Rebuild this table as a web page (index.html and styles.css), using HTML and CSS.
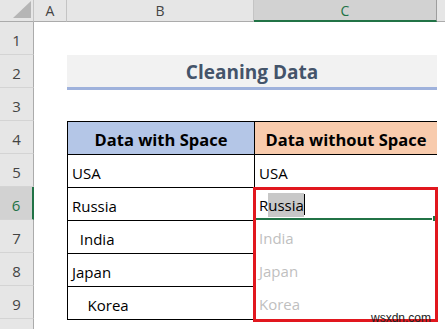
FILE: index.html
```html
<!DOCTYPE html>
<html lang="en">
<head>
    <meta charset="UTF-8">
    <meta name="viewport" content="width=device-width, initial-scale=1.0">
    <title>Cleaning Data</title>

    <link rel="stylesheet" href="styles.css">
</head>
<body>
    <div class="sheet">
        <!-- column headers -->
        <div class="col-head corner">
            <svg width="18" height="17" viewBox="0 0 18 17"><polygon points="18,0 18,17 0,17" fill="#b5b5b5"/></svg>
        </div>
        <div class="col-head">A</div>
        <div class="col-head">B</div>
        <div class="col-head active">C</div>
        <div class="col-head rest"></div>

        <!-- row 1 -->
        <div class="row-head">1</div>
        <div class="cell"></div><div class="cell"></div><div class="cell"></div><div class="cell"></div>

        <!-- row 2: title -->
        <div class="row-head">2</div>
        <div class="cell"></div>
        <div class="title">Cleaning Data</div>
        <div class="cell"></div>

        <!-- row 3 -->
        <div class="row-head">3</div>
        <div class="cell"></div><div class="cell"></div><div class="cell"></div><div class="cell"></div>

        <!-- row 4: table header -->
        <div class="row-head">4</div>
        <div class="cell"></div>
        <div class="cell td th with-space">Data with Space</div>
        <div class="cell td th no-space">Data without Space</div>
        <div class="cell"></div>

        <!-- row 5 -->
        <div class="row-head">5</div>
        <div class="cell"></div>
        <div class="cell td">USA</div>
        <div class="cell td">USA</div>
        <div class="cell"></div>

        <!-- row 6 -->
        <div class="row-head active">6</div>
        <div class="cell"></div>
        <div class="cell td">Russia</div>
        <div class="cell td editing">R<span class="sel">ussia</span><span class="caret"></span><span class="handle"></span></div>
        <div class="cell"></div>

        <!-- row 7 -->
        <div class="row-head">7</div>
        <div class="cell"></div>
        <div class="cell td">  India</div>
        <div class="cell td ghost">India</div>
        <div class="cell"></div>

        <!-- row 8 -->
        <div class="row-head">8</div>
        <div class="cell"></div>
        <div class="cell td">Japan</div>
        <div class="cell td ghost">Japan</div>
        <div class="cell"></div>

        <!-- row 9 -->
        <div class="row-head">9</div>
        <div class="cell"></div>
        <div class="cell td">    Korea</div>
        <div class="cell td ghost">Korea</div>
        <div class="cell"></div>

        <!-- row 10 (only its top edge is on screen) -->
        <div class="row-head"></div>
        <div class="cell"></div>
        <div class="cell td-end"></div>
        <div class="cell td-end"></div>
        <div class="cell"></div>

        <div class="callout"></div>
        <div class="mark">wsxdn.com</div>
    </div>
</body>
</html>
```

FILE: styles.css
```css
body {
    margin: 0;
    background-color: #fff;
    font-family: 'Open Sans', 'Noto Sans', sans-serif;
    color: #000;
}

.sheet {
    position: relative;
    display: grid;
    grid-template-columns: 34px 33px 187px 183px 1fr;
    grid-template-rows: 22px repeat(10, 33px);
    width: 445px;
    height: 329px;
    overflow: hidden;
}

.col-head {
    display: flex;
    align-items: center;
    justify-content: center;
    box-sizing: border-box;
    background-color: #e6e6e6;
    border-right: 1px solid #c4c4c4;
    border-bottom: 1px solid #ababab;
    font-size: 14px;
    color: #444;
}

.col-head.corner {
    align-items: flex-end;
    justify-content: flex-end;
    padding: 0 2px 3px 0;
}

.col-head.corner svg {
    display: block;
}

.col-head.active {
    background-color: #d2d2d2;
    color: #217346;
    border-right-color: #9e9e9e;
    border-bottom: 2px solid #217346;
}

.col-head.rest {
    border-right: none;
}

.row-head {
    display: flex;
    align-items: center;
    justify-content: center;
    box-sizing: border-box;
    padding-top: 3px;
    background-color: #e6e6e6;
    border-right: 1px solid #ababab;
    border-bottom: 1px solid #d4d4d4;
    font-size: 15px;
    color: #444;
}

.row-head.active {
    background-color: #d2d2d2;
    color: #217346;
    border-right: 2px solid #217346;
}

.cell {
    box-sizing: border-box;
}

.title {
    grid-column: 3 / span 2;
    align-self: start;
    height: 35px;
    box-sizing: border-box;
    display: flex;
    align-items: center;
    justify-content: center;
    padding-top: 2px;
    background-color: #f2f2f2;
    border-bottom: 3px solid #9fb2dc;
    font-size: 19px;
    font-weight: bold;
    color: #44546a;
    position: relative;
    z-index: 1;
}

.td {
    display: flex;
    align-items: center;
    padding: 3px 4px 0;
    border-left: 1px solid #000;
    border-top: 1px solid #000;
    font-size: 15px;
    white-space: pre;
    position: relative;
}

.td:nth-child(5n+4) {
    border-right: 1px solid #000;
}

.td-end {
    border-top: 1px solid #000;
}

.th {
    justify-content: center;
    font-size: 16.5px;
    font-weight: bold;
}

.with-space {
    background-color: #b4c6e7;
}

.no-space {
    background-color: #f8cbad;
}

.editing {
    border-bottom: 2px solid #217346;
}

.editing + .cell,
.ghost + .cell {
    border: none;
}

.ghost {
    border-top: none;
    color: #bfbfbf;
}

.sel {
    background-color: #c8c8c8;
    padding: 2px 0;
}

.caret {
    display: inline-block;
    width: 1px;
    height: 21px;
    background-color: #000;
}

.handle {
    position: absolute;
    right: -2px;
    bottom: -4px;
    width: 5px;
    height: 5px;
    background-color: #217346;
    border: 1px solid #fff;
}

.callout {
    position: absolute;
    left: 253px;
    top: 187px;
    width: 185px;
    height: 135px;
    box-sizing: border-box;
    border: 3px solid #e1171e;
}

.mark {
    position: absolute;
    left: 371px;
    top: 311px;
    font-family: 'Liberation Sans', sans-serif;
    font-size: 12px;
    color: #222;
}
```
